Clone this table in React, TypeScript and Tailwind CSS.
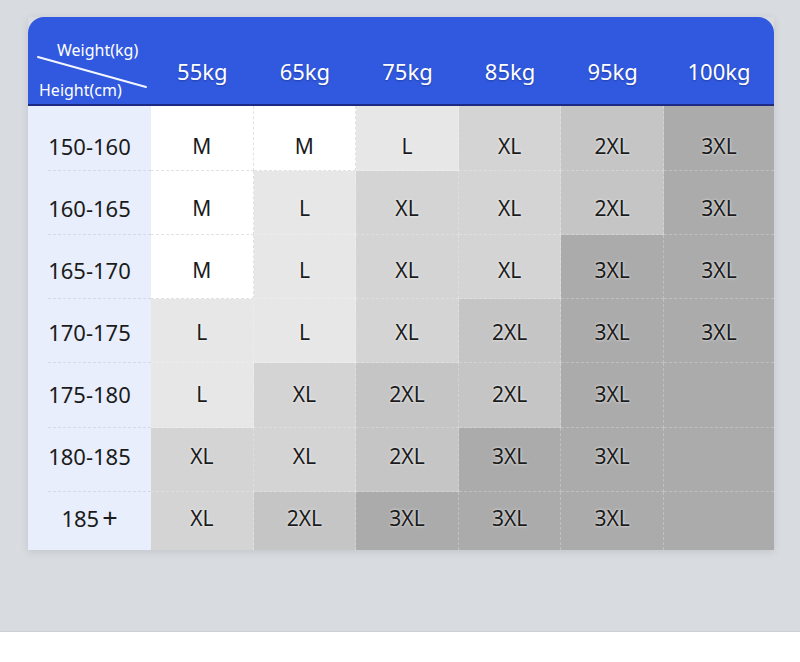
const sizeBg: Record<string, string> = {
  M: 'bg-white',
  L: 'bg-[#e7e7e7]',
  XL: 'bg-[#d4d4d4]',
  '2XL': 'bg-[#c5c5c5]',
  '3XL': 'bg-[#ababab]',
  '': 'bg-[#ababab]',
};

const weights = ['55kg', '65kg', '75kg', '85kg', '95kg', '100kg'];

const rows = [
  { height: '150-160', sizes: ['M', 'M', 'L', 'XL', '2XL', '3XL'], h: 'h-[65px]', pt: 'pt-[28px]' },
  { height: '160-165', sizes: ['M', 'L', 'XL', 'XL', '2XL', '3XL'], h: 'h-[64px]', pt: 'pt-[25px]' },
  { height: '165-170', sizes: ['M', 'L', 'XL', 'XL', '3XL', '3XL'], h: 'h-[64px]', pt: 'pt-[23px]' },
  { height: '170-175', sizes: ['L', 'L', 'XL', '2XL', '3XL', '3XL'], h: 'h-[64px]', pt: 'pt-[21px]' },
  { height: '175-180', sizes: ['L', 'XL', '2XL', '2XL', '3XL', ''], h: 'h-[65px]', pt: 'pt-[19px]' },
  { height: '180-185', sizes: ['XL', 'XL', '2XL', '3XL', '3XL', ''], h: 'h-[64px]', pt: 'pt-[16px]' },
  { height: '185+', sizes: ['XL', '2XL', '3XL', '3XL', '3XL', ''], h: 'h-[58px]', pt: 'pt-[14px]' },
];

const cols = 'grid grid-cols-[123px_repeat(5,102.6px)_1fr]';

const App = () => {
  return (
    <div className="min-h-[662px] bg-white font-['Noto_Sans',sans-serif]">
      <div className="h-[632px] bg-[#d8dce0] pl-[28px] pt-[17px] border-b border-[#cdd1d5]">
        <div className="w-[746px] shadow-[0_2px_8px_rgba(0,0,0,0.1)]">
          {/* header */}
          <div className={`${cols} h-[89px] rounded-t-[16px] bg-[#3159df] border-b-2 border-[#1c2a82] text-white`}>
            <div className="relative flex flex-col justify-between pt-[22px] pb-[3px] text-[16px] leading-[22px]">
              <svg className="absolute left-0 top-0" width="123" height="88">
                <line x1="10" y1="40" x2="118" y2="70" stroke="#f4f6ff" strokeWidth="2" strokeLinecap="round" />
              </svg>
              <span className="pl-[29px]">Weight(kg)</span>
              <span className="pl-[11px]">Height(cm)</span>
            </div>
            {weights.map((w) => (
              <div key={w} className="flex items-center justify-center pt-[22px] text-[22px] [text-shadow:0_1px_2px_rgba(0,0,40,0.3)]">
                {w}
              </div>
            ))}
          </div>

          {/* body */}
          {rows.map((r, ri) => {
            const last = ri === rows.length - 1;
            return (
              <div key={r.height} className={`${cols} ${r.h} text-[#1b1b1b]`}>
                <div className="bg-[#e8eefb] pl-5">
                  <div
                    className={`h-full flex justify-center pr-5 ${r.pt} text-[22px] leading-6 ${
                      last ? '' : 'border-b border-dashed border-[#d6dae3]'
                    }`}
                  >
                    {r.height.endsWith('+') ? (
                      <>
                        185<span className="ml-[3px] text-[27px] leading-6">+</span>
                      </>
                    ) : (
                      r.height
                    )}
                  </div>
                </div>
                {r.sizes.map((s, ci) => {
                  const line = s === 'M' ? 'border-[#e2e2e2]' : 'border-white/25';
                  return (
                    <div
                      key={ci}
                      className={`flex justify-center ${r.pt} ${sizeBg[s]} ${line} text-[21px] leading-6 [text-shadow:0_0_3px_rgba(255,255,255,0.9)] ${
                        last ? '' : 'border-b border-dashed'
                      } ${ci < 5 ? 'border-r border-dashed' : ''}`}
                    >
                      {s}
                    </div>
                  );
                })}
              </div>
            );
          })}
        </div>
      </div>
    </div>
  );
};

export default App;
